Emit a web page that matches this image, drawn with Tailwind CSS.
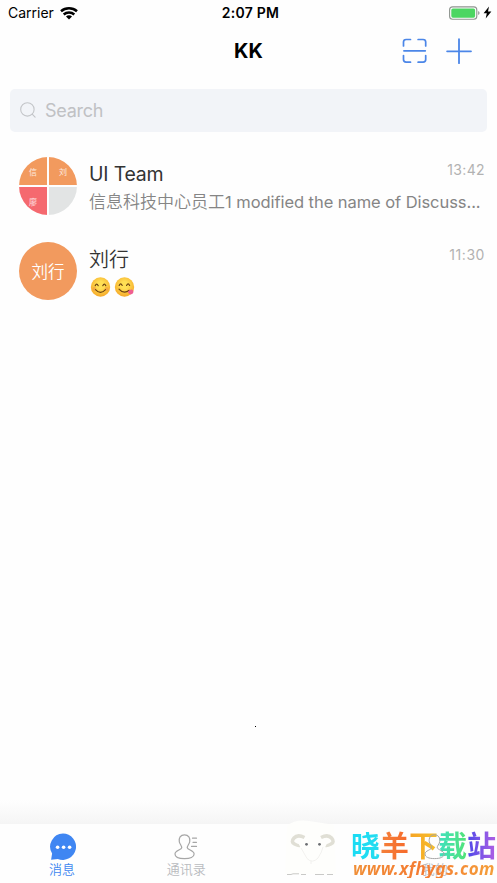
<!DOCTYPE html>
<html lang="zh-CN">
<head>
<meta charset="utf-8">
<meta name="viewport" content="width=device-width, initial-scale=1">
<title>KK</title>
<script src="https://cdn.jsdelivr.net/npm/@tailwindcss/browser@4"></script>
</head>
<body class="bg-white">
<div class="relative flex h-[883px] w-[497px] flex-col overflow-hidden bg-[#fefefe] font-['Inter','Noto_Sans_CJK_SC',sans-serif] whitespace-nowrap">

  <!-- Status bar -->
  <header class="grid h-[26px] grid-cols-[1fr_auto_1fr] items-center pr-[5px] pl-[8px] text-black">
    <div class="flex items-center gap-[6px]">
      <span class="text-[14px] leading-[26px]">Carrier</span>
      <svg class="h-[13px] w-[18px]" viewBox="0 0 18 13" fill="none" stroke="#000" stroke-width="2.5">
        <path d="M1 4.3C5.500.3 12.500.3 17 4.300"/><path d="M3.700 7.500c3-2.600 7.600-2.600 10.600 0"/><path d="M6 9.400c1.700-1.400 4.300-1.400 6 0L9 12.400z" fill="#000" stroke="none"/>
      </svg>
    </div>
    <span class="pl-px text-[14px] leading-[26px] font-semibold tracking-[0.25px]">2:07 PM</span>
    <div class="flex items-center justify-end gap-[2px] pb-px">
      <svg class="h-[14px] w-[32px]" viewBox="0 0 32 14">
        <rect x=".6" y=".9" width="27.2" height="12.4" rx="3" fill="#fff" stroke="#8e948f" stroke-width="1.1"/>
        <rect x="2.300" y="2.500" width="23.800" height="9.200" rx="1.600" fill="#4cd662"/>
        <path d="M29.200 5c1.800.8 1.800 3.200 0 4z" fill="#8e948f"/>
      </svg>
      <svg class="h-[13px] w-[9px]" viewBox="0 0 9 13"><path d="M6 .4.6 7.200h3.200L2.700 12.500 8.400 5.500H5z" fill="#000"/></svg>
    </div>
  </header>

  <!-- Title bar -->
  <div class="grid h-[50px] grid-cols-[1fr_auto_1fr] items-center pr-[25px] pl-[25px]">
    <span></span>
    <h1 class="text-[20px] leading-[50px] font-bold text-black">KK</h1>
    <div class="flex items-center justify-end gap-[18px]">
      <svg class="h-[26px] w-[26px]" viewBox="0 0 26 26" fill="none" stroke="#4b86e8" stroke-width="1.7" stroke-linecap="round">
        <path d="M1.500 7.900V4.100Q1.500 1.500 4.100 1.500H8.500M16.100 1.500h5q2.600 0 2.600 2.600v3.800M1.500 17.600v4q0 2.600 2.600 2.600h4.400M16.100 24.200h5q2.600 0 2.600-2.600v-4M1.900 12.800h21.400"/>
      </svg>
      <svg class="h-[26px] w-[26px]" viewBox="0 0 26 26" fill="none" stroke="#4b86e8" stroke-width="1.8" stroke-linecap="round"><path d="M13 1.200v24M1.100 13.300H25"/></svg>
    </div>
  </div>

  <!-- Search -->
  <label class="mx-[10px] mt-[13px] flex h-[43px] items-center gap-[8px] rounded-[5px] bg-[#f2f4f8] pl-[10px]">
    <svg class="h-[17px] w-[17px]" viewBox="0 0 17 17" fill="none" stroke="#c3c5c8" stroke-width="1.1" stroke-linecap="round"><circle cx="7.4" cy="7.4" r="6.7"/><path d="m12.2 12.2 2.9 2.9"/></svg>
    <span class="text-[18px] leading-[43px] tracking-[-0.25px] text-[#c0c1c4]">Search</span>
  </label>

  <!-- Conversations -->
  <main class="flex flex-1 flex-col pt-[14px]">
    <article class="flex h-[85px] gap-[12px] pr-[12px] pl-[19px]">
      <div class="mt-[11px] grid h-[58px] w-[58px] shrink-0 grid-cols-[28px_28px] grid-rows-[28px_28px] gap-[2px] overflow-hidden rounded-full text-[8px] leading-[30px] text-white/80">
        <span class="bg-[#f29a5e] pl-[10px]">信</span><span class="bg-[#f29a5e] pl-[10px]">刘</span>
        <span class="bg-[#f5696f] pl-[10px]">廖</span><span class="bg-[#e2e4e4]"></span>
      </div>
      <div class="min-w-0 flex-1 pt-[14px]">
        <div class="flex h-[28px] justify-between">
          <h2 class="text-[19.5px] leading-[28px] tracking-[-0.2px] text-[#333]">UI Team</h2>
          <time class="text-[14px] leading-[20px] tracking-[0.35px] text-[#b2b2b2]">13:42</time>
        </div>
        <p class="text-[17px] leading-[28px] text-[#858585]"><span class="font-[350]">信息科技中心员工</span><span class="text-[16.5px] tracking-[-0.06px]">1 modified the name of Discuss...</span></p>
      </div>
    </article>
    <article class="flex h-[85px] gap-[12px] pr-[12px] pl-[19px]">
      <div class="mt-[11px] flex h-[58px] w-[58px] shrink-0 items-center justify-center rounded-full bg-[#f29a5e] pt-[3px] text-[16.5px] font-[350] text-white">刘行</div>
      <div class="min-w-0 flex-1 pt-[14px]">
        <div class="flex h-[28px] justify-between">
          <h2 class="pt-px text-[20px] leading-[28px] font-[350] text-[#333]">刘行</h2>
          <time class="text-[14px] leading-[20px] tracking-[0.55px] text-[#b2b2b2]">11:30</time>
        </div>
        <div class="flex gap-[3px] pt-[4px] pl-[1px]">
          <svg class="h-[21px] w-[21px]" viewBox="0 0 21 21">
            <defs><radialGradient id="face" cx=".5" cy=".4" r=".6"><stop offset=".3" stop-color="#ffdf54"/><stop offset="1" stop-color="#f6a928"/></radialGradient></defs>
            <circle cx="10.5" cy="10" r="9.7" fill="url(#face)"/><g fill="#ee8e43" opacity=".45"><circle cx="4.3" cy="12" r="2"/><circle cx="16.7" cy="12" r="2"/></g>
            <path d="M5.2 8.7q1.5-3.2 3 0M12.8 8.7q1.5-3.2 3 0M5.5 12.7q5 5.4 10 0" fill="none" stroke="#6b4112" stroke-width="1.2" stroke-linecap="round"/>
          </svg>
          <svg class="h-[21px] w-[21px]" viewBox="0 0 21 21">
            <circle cx="10.5" cy="10" r="9.7" fill="url(#face)"/>
            <path d="M5.2 8.5q1.5-3.2 3 0M12.6 8.5q1.5-3.2 3 0M5 12.1q4.8 5.5 10.3 1.2" fill="none" stroke="#6b4112" stroke-width="1.2" stroke-linecap="round"/>
            <path d="M13.8 15q3.300-4 5.300-1.500c1 2.200-.9 4.200-2.800 3.900q-1.600-.4-2.500-2.400z" fill="#ef5e91"/>
          </svg>
        </div>
      </div>
    </article>
  </main>
  <span class="absolute top-[726px] left-[255px] h-px w-px bg-black"></span>

  <!-- Tab bar -->
  <div class="h-[24px] bg-linear-to-b from-[#fefefe] to-[#f5f5f5]"></div>
  <nav class="grid h-[59px] grid-cols-4 bg-[#fefefe] text-[13px] leading-[17px] font-[350]">
    <div class="flex flex-col items-center pt-[9px] text-[#4087f0]">
      <svg class="h-[28px] w-[28px]" viewBox="0 0 28 28"><path d="M15 .5a13.200 13.200 0 1 1-5.200 25.400L3.100 26.800l1-6.200A13.200 13.200 0 0 1 15 .5z" fill="#3f86f2"/><g fill="#fff"><circle cx="9.6" cy="14.3" r="1.8"/><circle cx="15.6" cy="14.3" r="1.8"/><circle cx="21.6" cy="14.3" r="1.8"/></g></svg>
      <span>消息</span>
    </div>
    <div class="flex flex-col items-center pt-[9px] text-[#b9bbbf]">
      <svg class="h-[28px] w-[28px]" viewBox="0 0 28 28" fill="none" stroke="#a6a6a6" stroke-width="1.2" stroke-linecap="round" stroke-linejoin="round"><path id="person" d="M12.5 1.8c-4.1 0-5.9 3.4-5.2 7 .5 2.300 2.800 4.400 2.400 6-.5 2-6.800 3-6.700 6.100 0 3.200 3.700 4.700 9.500 4.700s9.600-1.500 9.600-4.700c0-3.100-6.300-4.100-6.800-6.100-.4-1.600 1.900-3.700 2.400-6 .7-3.600-1.100-7-5.200-7z"/><path d="M20.500 5.200h4M21 9.300h3.500M19.500 13.400h5"/></svg>
      <span>通讯录</span>
    </div>
    <div></div>
    <div class="flex flex-col items-center pt-[9px] text-[#b9bbbf]">
      <div class="h-[28px]"></div>
      <span>我的</span>
    </div>
  </nav>

  <!-- Site badge over the tab bar -->
  <svg class="absolute top-[819px] left-[283px] h-[60px] w-[56px]" viewBox="0 0 56 60" fill="none">
    <path d="M4 7Q12 0 26 2t25 4l2 49H2z" fill="#fefefc"/>
    <path d="M21.500 18.500q-7-3.500-10.500.5t.5 6 5 1.500" stroke="#e0dfd5" stroke-width="3.500"/><path d="M38 18.500q7-3.500 10.500.5t-.5 6-5 1.500" stroke="#e0dfd5" stroke-width="3.500"/>
    <path d="M18 29q3 5 6 10.500Q29.500 45 35 39q4-6 5-11M28 42v3" stroke="#efeeeb" stroke-width=".8"/>
    <circle cx="23.500" cy="25.300" r="1.400" fill="#6c6f73"/><circle cx="36.500" cy="25.300" r="1.400" fill="#6c6f73"/>
    <path d="M4 55.500h4l2-.7h6M18 55.500h5M32 55.500h9M44 55.500h6" stroke="#c9c9c7" stroke-width="1"/>
  </svg>
  <div class="absolute top-[829px] left-[351px] w-[146px]">
    <div class="flex h-[31px] text-[29px] leading-[36px] font-bold">
      <span class="h-[36px] bg-linear-to-r from-[#19dcf4] to-[#25dcf0] bg-clip-text text-transparent">晓</span>
      <span class="h-[36px] bg-linear-to-r from-[#f4803a] to-[#f66a2b] bg-clip-text text-transparent">羊</span>
      <span class="h-[36px] bg-linear-to-r from-[#f6a325] to-[#f6c02a] bg-clip-text text-transparent">下</span>
      <span class="h-[36px] bg-linear-to-r from-[#40e0c0] to-[#52e373] bg-clip-text text-transparent">载</span>
      <span class="h-[36px] bg-linear-to-r from-[#4c45e8] to-[#b05fe4] bg-clip-text text-transparent">站</span>
    </div>
    <div class="bg-linear-to-r from-[#f09038] via-[#f47a32] to-[#f4a03a] bg-clip-text pl-[2px] font-['Noto_Sans','DejaVu_Sans',sans-serif] text-[17px] leading-[18px] font-bold tracking-[0.45px] text-transparent italic">www.xfhygs.com</div>
  </div>
  <svg class="absolute top-[833px] left-[422px] h-[28px] w-[28px]" viewBox="0 0 28 28" fill="none" stroke="#a6a6a6" stroke-width="1"><use href="#person"/></svg>
</div>
</body>
</html>
